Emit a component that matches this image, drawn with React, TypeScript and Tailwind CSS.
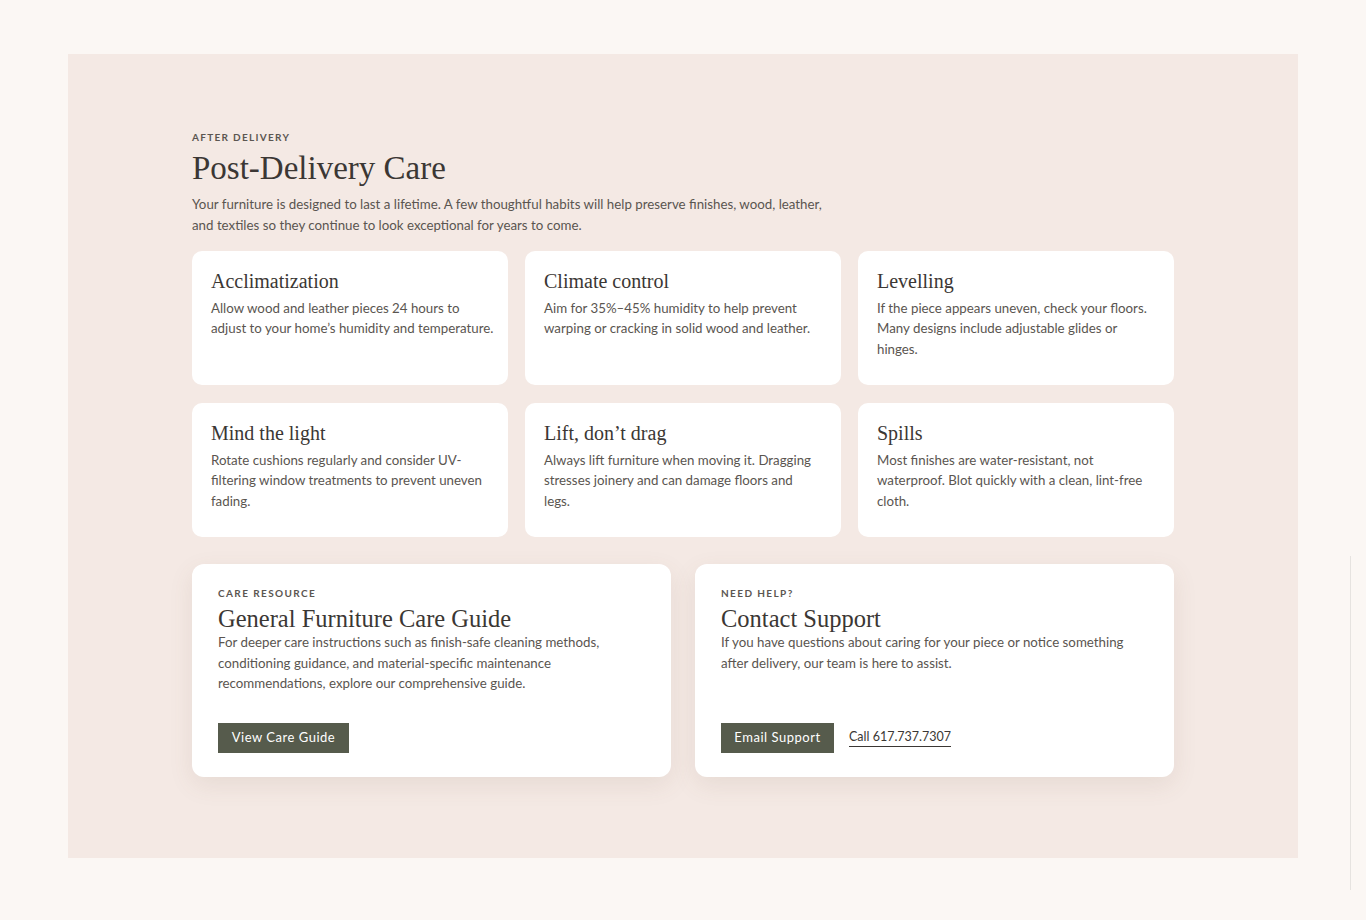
// each tip body is kept as its printed lines
const tips = [
  {
    title: "Acclimatization",
    lines: ["Allow wood and leather pieces 24 hours to", "adjust to your home’s humidity and temperature."],
  },
  {
    title: "Climate control",
    lines: ["Aim for 35%–45% humidity to help prevent", "warping or cracking in solid wood and leather."],
  },
  {
    title: "Levelling",
    lines: ["If the piece appears uneven, check your floors.", "Many designs include adjustable glides or", "hinges."],
  },
  {
    title: "Mind the light",
    lines: ["Rotate cushions regularly and consider UV-", "filtering window treatments to prevent uneven", "fading."],
  },
  {
    title: "Lift, don’t drag",
    lines: ["Always lift furniture when moving it. Dragging", "stresses joinery and can damage floors and", "legs."],
  },
  {
    title: "Spills",
    lines: ["Most finishes are water-resistant, not", "waterproof. Blot quickly with a clean, lint-free", "cloth."],
  },
];

const serif = "font-['Georgia','Liberation_Serif',serif]";
const sans = "font-['Lato','Liberation_Sans',sans-serif]";

export default function App() {
  return (
    <div className={`min-h-[920px] bg-[#fbf7f4] pt-[54px] pl-[68px] relative ${sans}`}>
      <section className="w-[1230px] h-[804px] bg-[#f4e9e4] pt-[78px] pl-[124px]">
        <div className="w-[982px]">
          <p className="text-[10px] font-bold tracking-[0.13em] text-[#5b5651] leading-none">
            AFTER DELIVERY
          </p>
          <h1 className={`${serif} text-[33px] leading-[40px] text-[#3b3734] mt-[6px]`}>
            Post-Delivery Care
          </h1>
          <p className="text-[13.3px] leading-[20.5px] text-[#5a5550] mt-[6px] w-[650px]">
            Your furniture is designed to last a lifetime. A few thoughtful habits will help preserve finishes, wood,
            leather, and textiles so they continue to look exceptional for years to come.
          </p>

          <div className="grid grid-cols-3 gap-x-[17px] gap-y-[18px] mt-[16px]">
            {tips.map((t) => (
              <div key={t.title} className="bg-white rounded-[10px] h-[134px] px-[19px] pt-[18px]">
                <h3 className={`${serif} text-[20px] leading-[24px] text-[#3b3734]`}>{t.title}</h3>
                <p className="text-[13.3px] leading-[20.3px] text-[#5a5550] mt-[5px]">
                  {t.lines.map((l) => (
                    <span key={l} className="block whitespace-nowrap">
                      {l}
                    </span>
                  ))}
                </p>
              </div>
            ))}
          </div>

          <div className="flex gap-[24px] mt-[27px]">
            <div className="w-[479px] h-[213px] bg-white rounded-[12px] shadow-[0_8px_24px_rgba(120,90,70,0.10)] px-[26px] pt-[24px] flex flex-col">
              <p className="text-[10px] font-bold tracking-[0.14em] text-[#5b5651] leading-none">
                CARE RESOURCE
              </p>
              <h2 className={`${serif} text-[24.5px] leading-[28px] text-[#3b3734] mt-[7px]`}>
                General Furniture Care Guide
              </h2>
              <p className="text-[13.3px] leading-[20.5px] text-[#5a5550] w-[400px] -mt-[1px]">
                For deeper care instructions such as finish-safe cleaning methods, conditioning guidance, and
                material-specific maintenance recommendations, explore our comprehensive guide.
              </p>
              <div className="mt-auto mb-[24px]">
                <button className="bg-[#565b4c] text-white text-[13px] tracking-[0.04em] h-[30px] w-[131px]">
                  View Care Guide
                </button>
              </div>
            </div>

            <div className="w-[479px] h-[213px] bg-white rounded-[12px] shadow-[0_8px_24px_rgba(120,90,70,0.10)] px-[26px] pt-[24px] flex flex-col">
              <p className="text-[10px] font-bold tracking-[0.14em] text-[#5b5651] leading-none">
                NEED HELP?
              </p>
              <h2 className={`${serif} text-[24.5px] leading-[28px] text-[#3b3734] mt-[7px]`}>
                Contact Support
              </h2>
              <p className="text-[13.3px] leading-[20.5px] text-[#5a5550] w-[420px] -mt-[1px]">
                If you have questions about caring for your piece or notice something after delivery, our team is
                here to assist.
              </p>
              <div className="mt-auto mb-[24px] flex items-center gap-[15px]">
                <button className="bg-[#565b4c] text-white text-[13px] tracking-[0.04em] h-[30px] w-[113px]">
                  Email Support
                </button>
                <a className="text-[12.5px] text-[#3b3734] border-b border-[#3b3734] leading-[16px] pb-[1px]">
                  Call 617.737.7307
                </a>
              </div>
            </div>
          </div>
        </div>
      </section>

      {/* faint scroll track at the right edge */}
      <div className="absolute left-[1350px] top-[556px] w-[1px] h-[334px] bg-[#e6e3e0]" />
    </div>
  );
}
